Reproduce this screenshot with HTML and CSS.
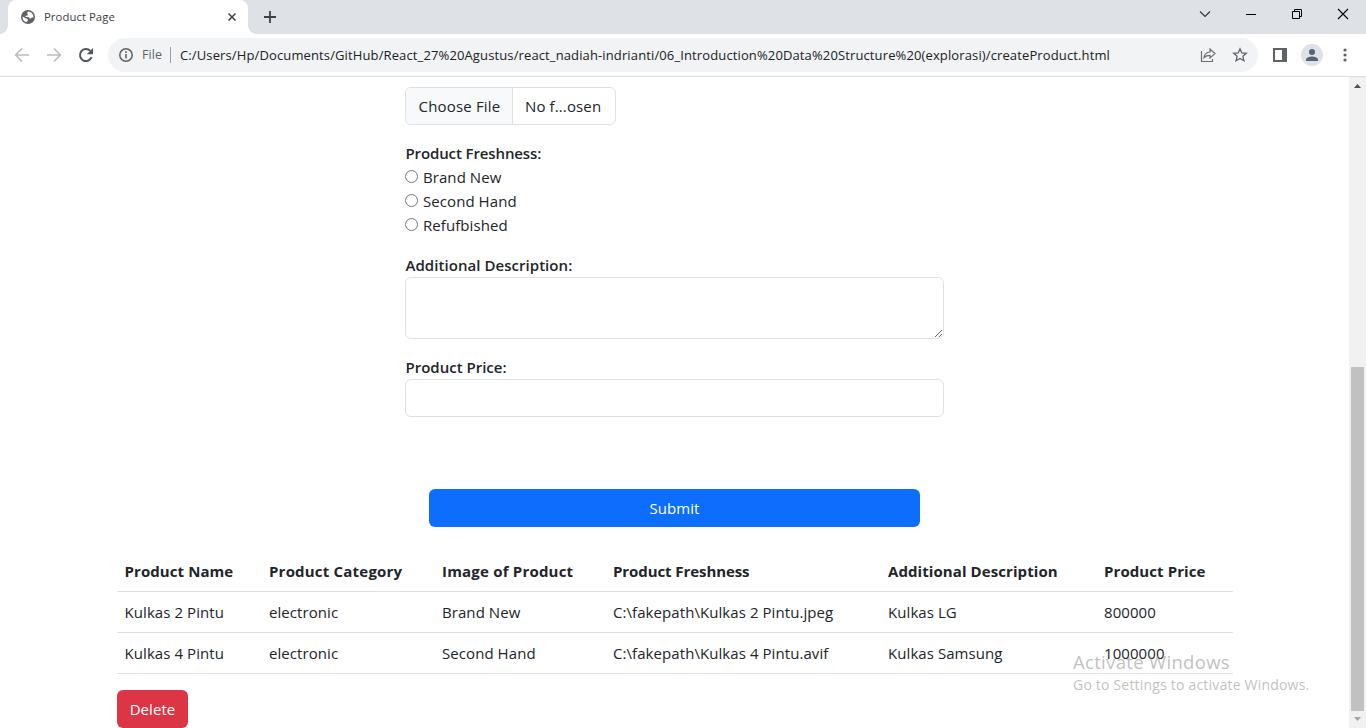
FILE: index.html
```html
<!DOCTYPE html>
<html lang="en">
<head>
<meta charset="utf-8">
<title>Product Page</title>
<link rel="stylesheet" href="styles.css">
</head>
<body>
<div class="browser">
  <header class="tabstrip">
    <div class="tab">
      <svg class="globe" width="14" height="14" viewBox="0 0 14 14"><circle cx="7" cy="7" r="7" fill="#5f6368"/><path d="M7.2 1.6 6 3.1l.9 1.2-.3 1.1-1.9.4-.2 1.3h3.1l.8 1.2 1.5.1.9-1 1.7.1C12.300 4 10.200 1.700 7.200 1.600ZM1.600 6.500l2.900 1.800 2.200.6.2 1.700-1.400 1.600C2.900 11.500 1.300 9.300 1.600 6.500Z" fill="#fff"/></svg>
      <span class="tab-title">Product Page</span>
      <svg class="tab-close" width="8" height="8" viewBox="0 0 8 8"><path d="M.5.5l7 7M7.500.5l-7 7" stroke="#3c4043" stroke-width="1.500"/></svg>
    </div>
    <svg class="new-tab" width="12" height="12" viewBox="0 0 12 12"><path d="M6 0v12M0 6h12" stroke="#3c4043" stroke-width="1.800"/></svg>
    <div class="window-controls">
      <svg width="46" height="28" viewBox="0 0 46 28"><path d="M18 11.500l5 5 5-5" fill="none" stroke="#333" stroke-width="1.100"/></svg>
      <svg width="46" height="28" viewBox="0 0 46 28"><path d="M18 14.500h10" stroke="#000"/></svg>
      <svg width="46" height="28" viewBox="0 0 46 28"><path d="M18.500 11.500h7v7h-7zM20.500 11.500v-2h7v7h-2" fill="none" stroke="#000"/></svg>
      <svg width="46" height="28" viewBox="0 0 46 28"><path d="M18 9l10 10M28 9l-10 10" stroke="#000" stroke-width="1.100"/></svg>
    </div>
  </header>
  <nav class="toolbar">
    <svg class="nav-icon" width="16" height="16" viewBox="0 0 16 16"><path d="M15 8H2M8 1.500 1.700 8 8 14.500" fill="none" stroke="#babcbe" stroke-width="1.700"/></svg>
    <svg class="nav-icon" width="16" height="16" viewBox="0 0 16 16"><path d="M1 8h13M8 1.500 14.300 8 8 14.500" fill="none" stroke="#babcbe" stroke-width="1.700"/></svg>
    <svg class="nav-icon" width="16" height="16" viewBox="0 0 16 16"><path d="M13.600 10.200A6 6 0 1 1 12.300 3.900" fill="none" stroke="#54585d" stroke-width="2"/><path d="M15 1v6.200H8.800z" fill="#54585d"/></svg>
    <div class="omnibox">
      <svg width="14" height="14" viewBox="0 0 14 14"><circle cx="7" cy="7" r="6.200" fill="none" stroke="#5f6368" stroke-width="1.500"/><path d="M7 6v4.500M7 3.300v1.600" stroke="#5f6368" stroke-width="1.600"/></svg>
      <span class="scheme">File</span>
      <span class="divider"></span>
      <span class="url">C:/Users/Hp/Documents/GitHub/React_27%20Agustus/react_nadiah-indrianti/06_Introduction%20Data%20Structure%20(explorasi)/createProduct.html</span>
      <svg class="share" width="16" height="16" viewBox="0 0 16 16"><path d="M1.500 4v10.500h11V12" fill="none" stroke="#6b6f73" stroke-width="1.200"/><path d="M4 10.500C4.500 7 6.500 5.200 10 5V2.200L15 6.600 10 11V8.300C7.500 8.300 5.500 9 4 10.500Z" fill="none" stroke="#6b6f73" stroke-width="1.200"/></svg>
      <svg class="star" width="16" height="16" viewBox="0 0 16 16"><path d="M8 1.800l1.800 4.100 4.500.4-3.400 3 1 4.400L8 11.400l-3.900 2.300 1-4.400-3.400-3 4.500-.4z" fill="none" stroke="#5f6368" stroke-width="1.300"/></svg>
    </div>
    <svg class="side-panel" width="14" height="14" viewBox="0 0 14 14"><path fill="#5f6368" fill-rule="evenodd" d="M0 0h14v14H0zM2 2v10h7V2z"/></svg>
    <svg class="avatar" width="22" height="22" viewBox="0 0 22 22"><circle cx="11" cy="11" r="11" fill="#dee1e6"/><circle cx="11" cy="8" r="3" fill="#56617a"/><path d="M5 17v-1.500C5 13.500 9 12.400 11 12.400s6 1.100 6 3.100V17z" fill="#56617a"/></svg>
    <svg class="kebab" width="4" height="14" viewBox="0 0 4 14"><g fill="#5f6368"><circle cx="2" cy="2" r="1.600"/><circle cx="2" cy="7" r="1.600"/><circle cx="2" cy="12" r="1.600"/></g></svg>
  </nav>
  <div class="viewport">
    <main class="page">
      <form class="form">
        <div class="file"><span class="file-button">Choose File</span><span class="file-name">No f...osen</span></div>
        <div class="label freshness"><span>Product Freshness:</span></div>
        <label class="option"><input type="radio" name="f"><span>Brand New</span></label>
        <label class="option"><input type="radio" name="f"><span>Second Hand</span></label>
        <label class="option"><input type="radio" name="f"><span>Refufbished</span></label>
        <div class="label description"><span>Additional Description:</span></div>
        <textarea class="control area"></textarea>
        <div class="label price"><span>Product Price:</span></div>
        <input class="control" type="text">
        <button class="submit" type="button">Submit</button>
      </form>
      <table class="products">
        <colgroup><col class="c1"><col class="c2"><col class="c3"><col class="c4"><col class="c5"><col class="c6"></colgroup>
        <thead><tr><th>Product Name</th><th class="wide">Product Category</th><th class="wide">Image of Product</th><th class="tight">Product Freshness</th><th>Additional Description</th><th>Product Price</th></tr></thead>
        <tbody>
          <tr><td>Kulkas 2 Pintu</td><td>electronic</td><td>Brand New</td><td>C:\fakepath\Kulkas 2 Pintu.jpeg</td><td>Kulkas LG</td><td>800000</td></tr>
          <tr><td>Kulkas 4 Pintu</td><td>electronic</td><td>Second Hand</td><td>C:\fakepath\Kulkas 4 Pintu.avif</td><td>Kulkas Samsung</td><td>1000000</td></tr>
        </tbody>
      </table>
      <button class="delete" type="button">Delete</button>
    </main>
    <div class="scrollbar">
      <svg width="17" height="17" viewBox="0 0 17 17"><path d="M5 11h7L8.500 7z" fill="#505050"/></svg>
      <div class="thumb"></div>
      <svg width="17" height="17" viewBox="0 0 17 17"><path d="M5 6h7L8.500 10z" fill="#a3a3a3"/></svg>
    </div>
  </div>
  <div class="watermark"><div class="wm-title">Activate Windows</div><div class="wm-text">Go to Settings to activate Windows.</div></div>
</div>
</body>
</html>
```
FILE: styles.css
```css
* { box-sizing: border-box; }
body { margin: 0; background: #fff; color: #212529; font-family: "Open Sans", "Noto Sans", sans-serif; font-size: 15px; letter-spacing: .07px; line-height: 24px; overflow: hidden; white-space: nowrap; }
svg { display: block; flex: none; }
.browser { height: 728px; display: flex; flex-direction: column; position: relative; }

.tabstrip { height: 34px; flex: none; background: #dee1e6; display: flex; }
.tab { width: 240px; margin-left: 8px; background: #fff; border-radius: 8px 8px 0 0; display: flex; align-items: center; padding-left: 13px; position: relative; }
.tab::before, .tab::after { content: ""; position: absolute; bottom: 0; width: 8px; height: 8px; }
.tab::before { left: -8px; background: radial-gradient(circle at 0 0, #dee1e6 7.5px, #fff 8px); }
.tab::after { right: -8px; background: radial-gradient(circle at 100% 0, #dee1e6 7.5px, #fff 8px); }
.tab-title { margin-left: 9px; font-size: 11.3px; color: #3c4043; width: 176px; }
.tab-close { margin-left: 8px; }
.new-tab { margin: 11px 0 0 16px; }
.window-controls { margin-left: auto; display: flex; }

.toolbar { height: 43px; flex: none; border-bottom: 1px solid #dadce0; display: flex; align-items: center; padding-left: 14px; }
.nav-icon { margin-right: 16px; }
.omnibox { width: 1150px; height: 34px; margin-left: -2px; border-radius: 17px; background: #f1f3f4; display: flex; align-items: center; padding: 0 10px 0 11px; font-size: 13px; color: #202124; }
.scheme { width: 22px; margin-left: 9px; font-size: 12.5px; color: #5f6368; }
.divider { width: 1px; height: 16px; margin: 0 9px 0 6px; background: #9aa0a6; }
.url { width: 1020px; letter-spacing: .125px; }
.star { margin-left: 16px; }
.side-panel { margin-left: 15px; }
.avatar { margin-left: 14px; }
.kebab { margin-left: 19.5px; }

.viewport { flex: 1; min-height: 0; display: flex; }
.page { width: 1349px; padding: 10px 116px 0 117px; overflow: hidden; }
.form { width: 539px; margin-left: 288px; display: flex; flex-direction: column; }
.file { width: 211px; height: 38px; border: 1px solid #dee2e6; border-radius: 6px; display: flex; align-items: center; overflow: hidden; }
.file-button { width: 107px; height: 36px; line-height: 37px; padding-left: 12.5px; background: #f8f9fa; border-right: 1px solid #dee2e6; letter-spacing: .18px; }
.file-name { margin-left: 12px; letter-spacing: .12px; }
.label { font-weight: 600; letter-spacing: 0; padding-left: .5px; }
.freshness { margin-top: 16px; letter-spacing: -.12px; }
.option { height: 24px; display: flex; align-items: center; }
.option input { width: 13px; height: 13px; margin: 0 5px 2px 0; }
.description, .price { margin-top: 16px; }
.description { letter-spacing: .05px; }
.control { width: 100%; height: 38px; border: 1px solid #dee2e6; border-radius: 6px; background: #fff; }
.area { height: 62px; resize: vertical; }
.submit { height: 38px; margin: 72px 24px 0; border: 0; border-radius: 6px; background: #0d6efd; color: #fff; font: inherit; letter-spacing: inherit; }
.products { width: 1116px; margin-top: 24px; table-layout: fixed; border-collapse: separate; border-spacing: 0; }
.products th, .products td { height: 41px; padding: 8px 7.5px; border-bottom: 1px solid #dee2e6; text-align: left; }
.products th { font-weight: 700; letter-spacing: .08px; }
.products .wide { letter-spacing: .2px; }
.products .tight { letter-spacing: -.08px; }
.c1 { width: 144.5px; } .c2 { width: 173px; } .c3 { width: 171px; } .c4 { width: 275px; } .c5 { width: 216px; } .c6 { width: 136.5px; }
.delete { width: 71px; height: 38px; margin-top: 16px; border: 0; border-radius: 6px; background: #dc3545; color: #fff; font: inherit; letter-spacing: inherit; }

.scrollbar { width: 17px; background: #f1f1f1; display: flex; flex-direction: column; }
.thumb { width: 13px; height: 344px; margin: auto 2px 0; background: #c1c1c1; }
.watermark { position: absolute; left: 1073px; top: 650px; color: rgba(150, 150, 150, .6); }
.wm-title { font-size: 18.5px; letter-spacing: .32px; }
.wm-text { font-size: 14px; line-height: 22px; letter-spacing: .2px; }
```
